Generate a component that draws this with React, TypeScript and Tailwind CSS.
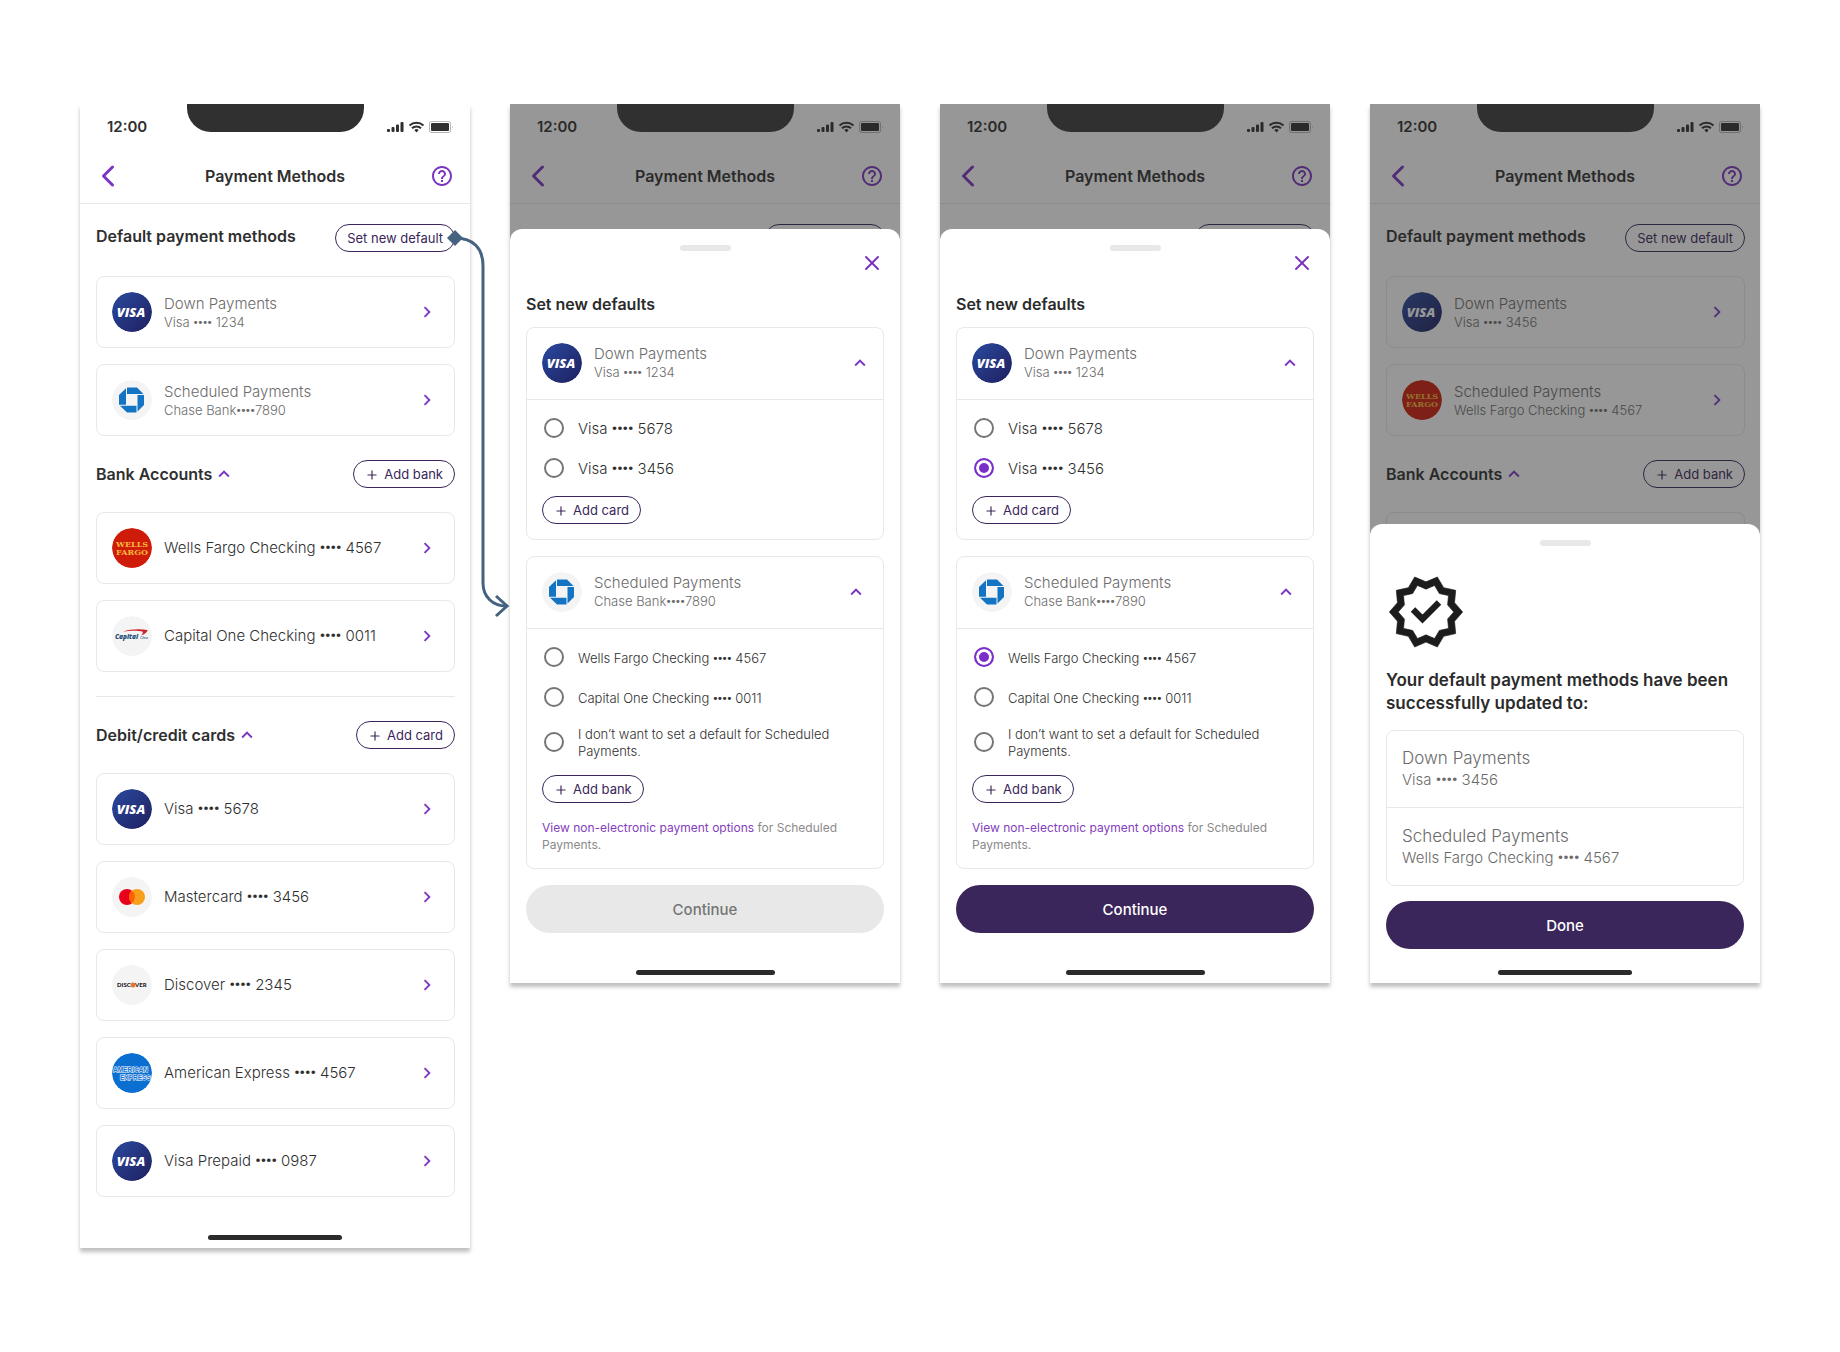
import { ReactNode } from "react";
import { ChevronLeft, Plus, X } from "lucide-react";
import { MdChevronRight, MdHelpOutline, MdKeyboardArrowUp } from "react-icons/md";

type Brand = "visa" | "chase" | "wells" | "capital" | "mastercard" | "discover" | "amex";

type Method = { brand: Brand; title: string; detail?: string };

const bankAccounts: Method[] = [
  { brand: "wells", title: "Wells Fargo Checking •••• 4567" },
  { brand: "capital", title: "Capital One Checking •••• 0011" },
];

const cards: Method[] = [
  { brand: "visa", title: "Visa •••• 5678" },
  { brand: "mastercard", title: "Mastercard •••• 3456" },
  { brand: "discover", title: "Discover •••• 2345" },
  { brand: "amex", title: "American Express •••• 4567" },
  { brand: "visa", title: "Visa Prepaid •••• 0987" },
];

const oldDefaults: Method[] = [
  { brand: "visa", title: "Down Payments", detail: "Visa •••• 1234" },
  { brand: "chase", title: "Scheduled Payments", detail: "Chase Bank••••7890" },
];

const newDefaults: Method[] = [
  { brand: "visa", title: "Down Payments", detail: "Visa •••• 3456" },
  { brand: "wells", title: "Scheduled Payments", detail: "Wells Fargo Checking •••• 4567" },
];

function BrandLogo({ brand }: { brand: Brand }) {
  return (
    <svg viewBox="0 0 40 40" className="size-10 shrink-0 rounded-full" aria-hidden="true">
      {brand === "visa" && (
        <>
          <defs>
            <linearGradient id="visaBlue" x1="0" y1="0" x2="1" y2="1">
              <stop offset="0" stopColor="#2a4a9f" />
              <stop offset="1" stopColor="#1f1f5f" />
            </linearGradient>
          </defs>
          <circle cx="20" cy="20" r="20" fill="url(#visaBlue)" />
          <text x="19" y="25" textAnchor="middle" fontSize="13" fontWeight="800" fontStyle="italic" fontFamily="Open Sans, sans-serif" fill="#fff">
            VISA
          </text>
        </>
      )}
      {brand === "chase" && (
        <>
          <circle cx="20" cy="20" r="20" fill="#f4f4f4" />
          <g fill="#1474c4">
            <path d="M15 7.500h10l6.500 6.500H15z" />
            <path d="M32 15v10l-6.500 6.500V15z" />
            <path d="M24.500 32.500h-9.500L8 25.800h16.500z" />
            <path d="M7 24.800V15l7-6.800v16.600z" />
          </g>
        </>
      )}
      {brand === "wells" && (
        <>
          <circle cx="20" cy="20" r="20" fill="#cf1b0a" />
          <g textAnchor="middle" fontSize="8" fontWeight="700" fontFamily="DejaVu Serif, serif" fill="#f5b93a">
            <text x="20" y="18.500">WELLS</text>
            <text x="20" y="27">FARGO</text>
          </g>
        </>
      )}
      {brand === "capital" && (
        <>
          <circle cx="20" cy="20" r="20" fill="#f4f4f4" />
          <text x="3" y="22.500" fontSize="6.500" fontWeight="800" fontStyle="italic" fontFamily="Open Sans, sans-serif" fill="#1c4d78">
            Capital
          </text>
          <text x="28" y="23" fontSize="5" fontStyle="italic" fontFamily="Liberation Serif, serif" fill="#1c4d78">
            One
          </text>
          <path d="M11 15.500C18 13 28 12.500 35.500 14c0 2-3 4.500-6.500 5.500 1.500-1.500 2.500-3 1.500-4-4-1.200-13-1-19.500 0z" fill="#c9252c" />
        </>
      )}
      {brand === "mastercard" && (
        <>
          <circle cx="20" cy="20" r="20" fill="#f4f4f4" />
          <circle cx="15" cy="20" r="8" fill="#eb001b" />
          <circle cx="25" cy="20" r="8" fill="#f79e1b" />
          <path d="M20 13.800a8 8 0 0 1 0 12.400 8 8 0 0 1 0-12.400z" fill="#ff5f00" />
        </>
      )}
      {brand === "discover" && (
        <>
          <circle cx="20" cy="20" r="20" fill="#f4f4f4" />
          <text x="5" y="22" fontSize="6" fontWeight="900" fontFamily="Lato, sans-serif" fill="#222">
            DISC
          </text>
          <circle cx="21" cy="20" r="2.500" fill="#e8762c" />
          <text x="23" y="22" fontSize="6" fontWeight="900" fontFamily="Lato, sans-serif" fill="#222">
            VER
          </text>
        </>
      )}
      {brand === "amex" && (
        <>
          <circle cx="20" cy="20" r="20" fill="#0a6fd1" />
          <g fontSize="6.500" fontWeight="700" fontFamily="Liberation Sans, sans-serif" fill="#0a6fd1" stroke="#fff" strokeWidth="1" paintOrder="stroke">
            <text x="1" y="19">AMERICAN</text>
            <text x="8" y="27">EXPRESS</text>
          </g>
        </>
      )}
    </svg>
  );
}

// the masked part of a number is set in Roboto, whose bullets sit tighter
function Masked({ text }: { text: string }) {
  const [before, after] = text.split("••••");
  if (after === undefined) return <>{text}</>;
  return (
    <>
      {before}
      <span className="font-['Roboto',sans-serif] font-bold">••••</span>
      {after}
    </>
  );
}

function StatusBar() {
  return (
    <div className="flex h-[46px] items-center justify-between pr-4 pl-[27px] text-[#2f2f2f]">
      <span className="font-['Inter',sans-serif] text-[15px] font-semibold">12:00</span>
      <svg viewBox="0 0 68 14" className="h-[14px] w-[68px]" fill="currentColor" aria-hidden="true">
        <rect x="1" y="9" width="3" height="3" rx="1" />
        <rect x="5.500" y="7" width="3" height="5" rx="1" />
        <rect x="10" y="4.500" width="3" height="7.500" rx="1" />
        <rect x="14.500" y="2" width="3" height="10" rx="1" />
        <g fill="none" stroke="currentColor" strokeWidth="2">
          <path d="M23.500 5.500a10.500 10.500 0 0 1 14 0" />
          <path d="M26 8.300a6.500 6.500 0 0 1 9 0" />
        </g>
        <path d="M28.300 10a3.500 3.500 0 0 1 4.400 0L30.500 12.400z" />
        <rect x="43.500" y="1.500" width="21" height="11" rx="2" fill="none" stroke="currentColor" opacity="0.350" />
        <rect x="45" y="3" width="18" height="8" rx="1" />
        <path d="M66 5.500v3q1-1.500 0-3z" opacity="0.500" />
      </svg>
    </div>
  );
}

function Notch() {
  return (
    <div className="absolute inset-x-0 top-0 flex justify-center">
      <div className="h-7 w-[177px] rounded-b-3xl bg-[#303030]" />
    </div>
  );
}

function PillButton({ plus, children }: { plus?: boolean; children: ReactNode }) {
  return (
    <button className="flex h-7 items-center gap-[5px] rounded-full border border-[#3a265a] px-[11px] pt-[2px] text-[13px] text-[#3a265a]">
      {plus && <Plus className="size-[14px]" />}
      {children}
    </button>
  );
}

function MethodText({ method }: { method: Method }) {
  if (!method.detail) {
    return (
      <span className="flex-1 text-left text-[15px] leading-5 font-light text-[#2f2f2f]">
        <Masked text={method.title} />
      </span>
    );
  }
  return (
    <span className="flex flex-1 flex-col pt-px text-left text-[#6b6b6b]">
      <span className="text-[15px] leading-[19px] font-light">{method.title}</span>
      <span className="text-[13px] leading-[19px] font-light">
        <Masked text={method.detail} />
      </span>
    </span>
  );
}

function MethodRow({ method }: { method: Method }) {
  return (
    <button className="flex h-[72px] w-full items-center gap-3 rounded-lg border border-[#e8e8e8] px-[15px]">
      <BrandLogo brand={method.brand} />
      <MethodText method={method} />
      <MdChevronRight className="size-6 p-px text-[#7b35c1]" />
    </button>
  );
}

function MethodList({ methods }: { methods: Method[] }) {
  return (
    <div className="flex flex-col gap-4">
      {methods.map((m) => (
        <MethodRow key={m.title} method={m} />
      ))}
    </div>
  );
}

function SectionTitle({ title, children, toggle }: { title: string; children: ReactNode; toggle?: boolean }) {
  return (
    <div className={`flex h-7 justify-between ${toggle ? "items-center" : "items-start"}`}>
      <h2 className="flex items-center text-[16px] leading-6 font-semibold text-[#2f2f2f]">
        {title}
        {toggle && <MdKeyboardArrowUp className="size-6 p-px text-[#7b35c1]" />}
      </h2>
      {children}
    </div>
  );
}

function PageHeader() {
  return (
    <>
      <StatusBar />
      <nav className="flex h-[54px] items-center justify-between border-b border-[#e8e8e8] px-4 pb-[2px]">
        <button aria-label="Back" className="flex size-6 items-center justify-center">
          <ChevronLeft className="size-9 shrink-0 text-[#7b35c1]" />
        </button>
        <h1 className="text-[16px] font-semibold text-[#2f2f2f]">Payment Methods</h1>
        <button aria-label="Help">
          <MdHelpOutline className="size-6 text-[#7b35c1]" />
        </button>
      </nav>
    </>
  );
}

function DefaultsTitle() {
  return (
    <SectionTitle title="Default payment methods">
      <PillButton>Set new default</PillButton>
    </SectionTitle>
  );
}

function BanksTitle() {
  return (
    <SectionTitle title="Bank Accounts" toggle>
      <PillButton plus>Add bank</PillButton>
    </SectionTitle>
  );
}

function PageBody({ children }: { children: ReactNode }) {
  return <div className="flex flex-col gap-6 pt-5 pr-[15px] pl-4">{children}</div>;
}

function HomeBar({ wide }: { wide?: boolean }) {
  return <div className={`mx-auto h-[5px] rounded-full bg-[#2b2b2b] ${wide ? "w-[139px]" : "w-[134px]"}`} />;
}

function Phone({ children }: { children: ReactNode }) {
  return (
    <section className="relative bg-white shadow-[0_4px_4px_rgba(0,0,0,0.25)]">
      {children}
      <Notch />
    </section>
  );
}

// dimmed page behind a bottom sheet
function Backdrop({ children }: { children: ReactNode }) {
  return (
    <div className="absolute inset-0 overflow-hidden" inert>
      <PageHeader />
      <PageBody>{children}</PageBody>
      <div className="absolute inset-0 bg-[#262626]/48" />
    </div>
  );
}

function Handle() {
  return <div className="mx-auto h-[6px] w-[51px] rounded-full bg-[#e8e8e8]" />;
}

type OptionProps = { name: string; label: string; checked: boolean; small?: boolean; tall?: boolean };

function Option({ name, label, checked, small, tall }: OptionProps) {
  return (
    <label className={`flex items-center gap-[14px] pl-[2px] text-[#2f2f2f] ${tall ? "h-[50px]" : "h-10"}`}>
      <input
        type="radio"
        name={name}
        defaultChecked={checked}
        className="size-5 shrink-0 appearance-none rounded-full border-2 border-[#757575] checked:border-[#7b2fc9] checked:bg-[#7b2fc9] checked:shadow-[inset_0_0_0_3px_white]"
      />
      <span className={small ? "pt-[2px] text-[13px] leading-[17px] font-light" : "pt-px text-[15px] leading-5 font-light"}>
        <Masked text={label} />
      </span>
    </label>
  );
}

function DefaultGroup({ method, inset, children }: { method: Method; inset: string; children: ReactNode }) {
  return (
    <div className="rounded-lg border border-[#e8e8e8]">
      <button className={`flex h-[72px] w-full items-center gap-3 border-b border-[#e8e8e8] pb-[2px] pl-[15px] ${inset}`}>
        <BrandLogo brand={method.brand} />
        <MethodText method={method} />
        <MdKeyboardArrowUp className="size-6 p-px text-[#7b35c1]" />
      </button>
      <div className="px-[15px] pt-2 pb-[15px]">{children}</div>
    </div>
  );
}

function SetDefaults({ id, chosen }: { id: string; chosen: boolean }) {
  return (
    <Phone>
      <Backdrop>
        <DefaultsTitle />
      </Backdrop>
      <div className="relative pt-[125px]">
        <div className="rounded-t-xl bg-white px-4 pt-4 pb-2">
          <Handle />
          <div className="flex justify-end">
            <button aria-label="Close">
              <X className="size-6 text-[#7b35c1]" />
            </button>
          </div>
          <h2 className="mt-[17px] mb-[11px] text-[16px] leading-6 font-semibold text-[#2b2b2b]">Set new defaults</h2>
          <div className="flex flex-col gap-4">
            <DefaultGroup method={oldDefaults[0]} inset="pr-[11px]">
              <Option name={`${id}-down`} label="Visa •••• 5678" checked={false} />
              <Option name={`${id}-down`} label="Visa •••• 3456" checked={chosen} />
              <div className="mt-2 flex">
                <PillButton plus>Add card</PillButton>
              </div>
            </DefaultGroup>
            <DefaultGroup method={oldDefaults[1]} inset="pr-[15px]">
              <Option name={`${id}-sched`} label="Wells Fargo Checking •••• 4567" checked={chosen} small />
              <Option name={`${id}-sched`} label="Capital One Checking •••• 0011" checked={false} small />
              <Option name={`${id}-sched`} label="I don’t want to set a default for Scheduled Payments." checked={false} small tall />
              <div className="mt-2 mb-4 flex">
                <PillButton plus>Add bank</PillButton>
              </div>
              <p className="text-[12px] leading-[17px] text-[#8a8a8a]">
                <a href="#options" className="text-[#8440bd]">
                  View non-electronic payment options
                </a>{" "}
                for Scheduled Payments.
              </p>
            </DefaultGroup>
            <button
              disabled={!chosen}
              className={`h-12 rounded-full pt-[2px] text-[15px] font-medium ${chosen ? "bg-[#3a265a] text-white" : "bg-[#e8e8e8] text-[#757575]"}`}
            >
              Continue
            </button>
          </div>
          <div className="pt-[37px]">
            <HomeBar wide />
          </div>
        </div>
      </div>
    </Phone>
  );
}

function VerifiedBadge() {
  return (
    <svg viewBox="0 0 24 24" className="mt-[26px] size-20 text-[#1c1c1c]" fill="currentColor" aria-hidden="true">
      <path d="M23 11.990l-2.440-2.790.340-3.690-3.610-.820L15.400 1.500 12 2.960 8.600 1.500 6.710 4.690 3.100 5.500l.340 3.700L1 11.990l2.440 2.790-.340 3.700 3.610.820 1.890 3.200 3.400-1.470 3.400 1.460 1.890-3.190 3.610-.820-.340-3.690L23 11.990zm-3.950 1.480l-.560.650.080.850.180 1.950-1.900.430-.840.190-.440.740-.990 1.680-1.780-.770-.800-.340-.790.340-1.780.770-.990-1.670-.440-.740-.840-.190-1.900-.430.180-1.960.080-.850-.560-.650L3.670 12l1.290-1.480.560-.650-.090-.860-.180-1.940 1.900-.430.840-.190.440-.740.990-1.680 1.780.770.800.340.790-.340 1.780-.770.990 1.680.440.740.840.190 1.900.430-.180 1.950-.080.850.560.650 1.290 1.470-1.280 1.480z" stroke="currentColor" strokeWidth="0.200" />
      <path d="M8.100 11.250l2.850 2.850 4.950-4.950" fill="none" stroke="currentColor" strokeWidth="1.900" />
    </svg>
  );
}

function Success() {
  return (
    <Phone>
      <Backdrop>
        <DefaultsTitle />
        <MethodList methods={newDefaults} />
        <BanksTitle />
        <div className="h-[72px] rounded-lg border border-[#e8e8e8]" />
      </Backdrop>
      <div className="relative pt-[420px]">
        <div className="rounded-t-xl bg-white px-4 pt-4 pb-2">
          <Handle />
          <VerifiedBadge />
          <h2 className="mt-[17px] text-[17px] leading-[23px] font-semibold text-[#2b2b2b]">
            Your default payment methods have been successfully updated to:
          </h2>
          <div className="mt-[15px] divide-y divide-[#e8e8e8] rounded-lg border border-[#e8e8e8] text-[#6b6b6b]">
            {newDefaults.map((m) => (
              <div key={m.title} className="flex h-[77px] flex-col justify-center px-[15px]">
                <span className="text-[17px] leading-[22px] font-light">{m.title}</span>
                <span className="text-[15px] leading-[22px] font-light">
                  <Masked text={m.detail ?? ""} />
                </span>
              </div>
            ))}
          </div>
          <button className="mt-[15px] h-12 w-full rounded-full bg-[#3a265a] pt-[2px] text-[15px] font-medium text-white">Done</button>
          <div className="pt-[21px]">
            <HomeBar />
          </div>
        </div>
      </div>
    </Phone>
  );
}

// connector from "Set new default" to the sheet it opens
function FlowArrow() {
  return (
    <svg viewBox="0 0 64 394" className="absolute top-[120px] left-[366px] h-[394px] w-16" fill="none" stroke="#45627f" strokeWidth="3" aria-hidden="true">
      <path d="M9 14c18 0 28 10 28 28v317c0 14 10 23 23 23" />
      <path d="M50 372l11 10-11 10" />
      <path d="M9 6l8 8-8 8-8-8z" fill="#45627f" stroke="none" />
    </svg>
  );
}

export default function App() {
  return (
    <main className="grid min-h-screen grid-cols-4 items-start gap-10 bg-white px-20 pt-[104px] pb-[104px] font-['Inter',sans-serif]">
      <div className="relative">
        <Phone>
          <PageHeader />
          <PageBody>
            <DefaultsTitle />
            <MethodList methods={oldDefaults} />
            <BanksTitle />
            <MethodList methods={bankAccounts} />
            <hr className="border-[#e8e8e8]" />
            <SectionTitle title="Debit/credit cards" toggle>
              <PillButton plus>Add card</PillButton>
            </SectionTitle>
            <MethodList methods={cards} />
          </PageBody>
          <div className="pt-[38px] pb-2">
            <HomeBar />
          </div>
        </Phone>
        <FlowArrow />
      </div>
      <SetDefaults id="empty" chosen={false} />
      <SetDefaults id="picked" chosen />
      <Success />
    </main>
  );
}
